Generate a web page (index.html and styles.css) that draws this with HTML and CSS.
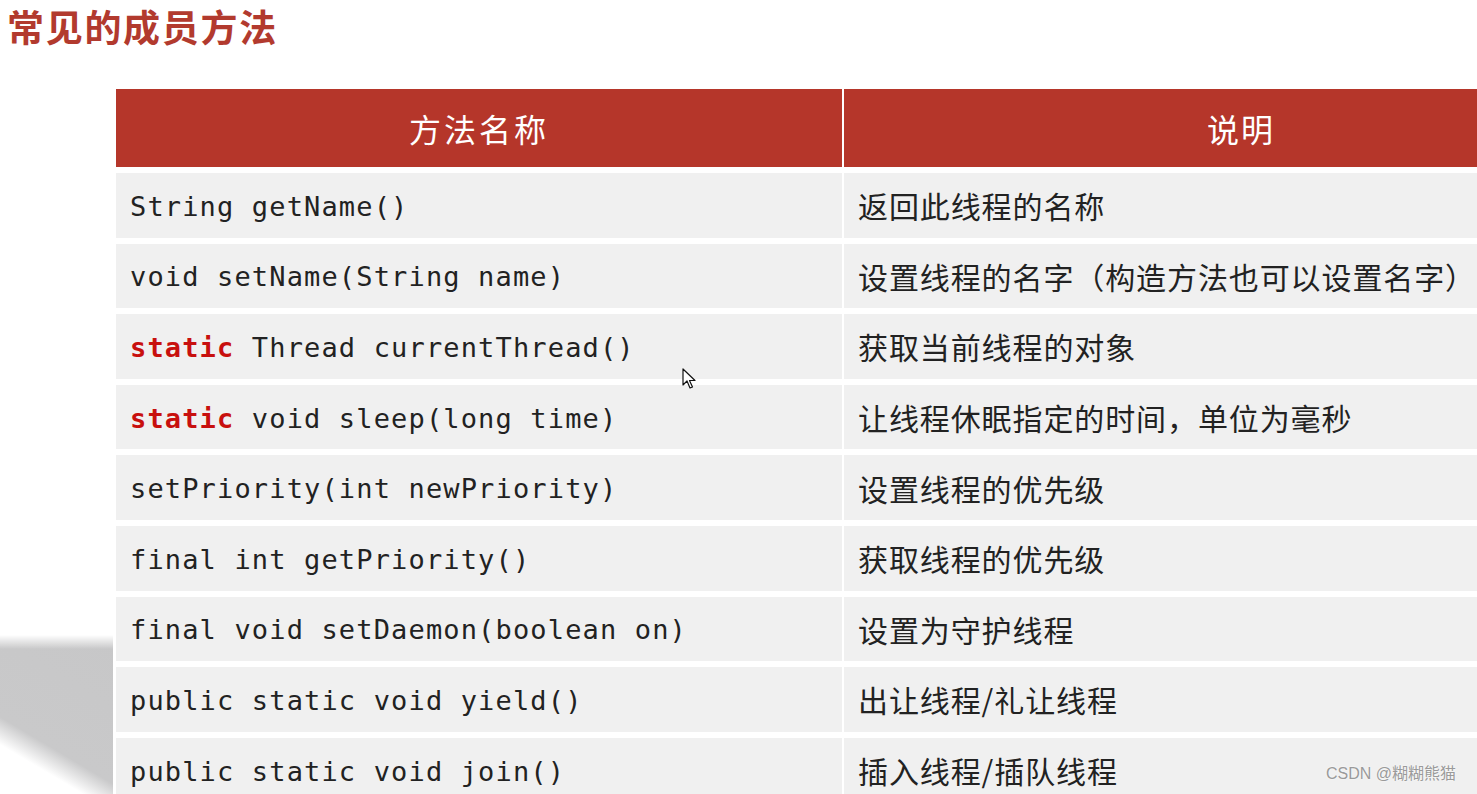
FILE: index.html
```html
<!DOCTYPE html>
<html lang="zh-CN">
<head>
<meta charset="utf-8">
<title>常见的成员方法</title>
<link rel="stylesheet" href="styles.css">
</head>
<body>
<div class="page">
  <h1 class="title">常见的成员方法</h1>
  <div class="table">
    <div class="th">方法名称</div>
    <div class="th">说明</div>

    <div class="td code"><span>String getName()</span></div>
    <div class="td desc">返回此线程的名称</div>

    <div class="td code"><span>void setName(String name)</span></div>
    <div class="td desc">设置线程的名字（构造方法也可以设置名字）</div>

    <div class="td code"><span><span class="kw">static</span> Thread currentThread()</span></div>
    <div class="td desc">获取当前线程的对象</div>

    <div class="td code"><span><span class="kw">static</span> void sleep(long time)</span></div>
    <div class="td desc">让线程休眠指定的时间，单位为毫秒</div>

    <div class="td code"><span>setPriority(int newPriority)</span></div>
    <div class="td desc">设置线程的优先级</div>

    <div class="td code"><span>final int getPriority()</span></div>
    <div class="td desc">获取线程的优先级</div>

    <div class="td code"><span>final void setDaemon(boolean on)</span></div>
    <div class="td desc">设置为守护线程</div>

    <div class="td code"><span>public static void yield()</span></div>
    <div class="td desc">出让线程/礼让线程</div>

    <div class="td code"><span>public static void join()</span></div>
    <div class="td desc">插入线程/插队线程</div>
  </div>
  <div class="shadow"></div>
  <svg class="cursor" width="16" height="22" viewBox="0 0 16 22">
    <path d="M1 1 L1 17 L5 13 L8 20 L10.5 19 L7.5 12.5 L13 12.5 Z" fill="#fff" stroke="#111" stroke-width="1.2" stroke-linejoin="round"/>
  </svg>
  <div class="watermark">CSDN @糊糊熊猫</div>
</div>
</body>
</html>
```
FILE: styles.css
```css
html, body {
  margin: 0;
  padding: 0;
  background: #ffffff;
  overflow: hidden;
}
.page {
  position: relative;
  width: 1477px;
  height: 794px;
  overflow: hidden;
  background: #ffffff;
}
.title {
  margin: 0;
  padding: 6px 0 0 7px;
  height: 89px;
  box-sizing: border-box;
  font-family: "Noto Sans CJK SC", sans-serif;
  font-weight: 700;
  font-size: 37px;
  line-height: 40px;
  letter-spacing: 1.7px;
  color: #b23a2e;
}
.table {
  display: grid;
  grid-template-columns: 726px 1fr;
  grid-template-rows: 78px repeat(9, 64.6px);
  column-gap: 2px;
  row-gap: 6px;
  margin-left: 116px;
}
.th {
  background: #b5362a;
  color: #ffffff;
  font-family: "Noto Sans CJK SC", sans-serif;
  font-size: 32px;
  letter-spacing: 3px;
  display: flex;
  align-items: center;
  justify-content: center;
}
.th:nth-child(2) {
  justify-content: flex-start;
  padding-left: 363px;
  letter-spacing: 2px;
}
.td {
  background: #f0f0f0;
  color: #222222;
  display: flex;
  align-items: center;
  padding-left: 14px;
  white-space: pre;
  overflow: hidden;
}
.code {
  font-family: "DejaVu Sans Mono", monospace;
  font-size: 27px;
  letter-spacing: 1.15px;
  padding-top: 2px;
}
.kw {
  color: #c8100e;
  font-weight: 700;
}
.desc {
  font-family: "Noto Sans CJK SC", sans-serif;
  font-size: 30px;
  letter-spacing: 0.9px;
}
.shadow {
  position: absolute;
  left: 0;
  top: 635px;
  width: 113px;
  height: 220px;
  background-image:
    linear-gradient(to bottom, #ffffff 0px, rgba(255,255,255,0) 14px),
    linear-gradient(210.7deg, #c7c7c8 0px, #c9c9ca 128px, #ffffff 152px);
}
.cursor {
  position: absolute;
  left: 682px;
  top: 368px;
}
.watermark {
  position: absolute;
  left: 1326px;
  top: 764px;
  font-family: "Liberation Sans", "Noto Sans CJK SC", sans-serif;
  font-size: 16px;
  line-height: 20px;
  color: #9a9a9a;
  text-shadow: 0 0 2px #ffffff;
}
```
